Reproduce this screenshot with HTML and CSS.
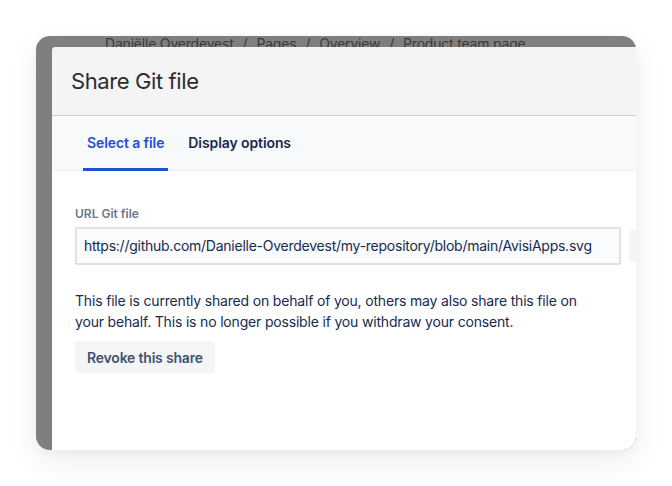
FILE: index.html
```html
<!DOCTYPE html>
<html>
<head>
<meta charset="utf-8">
<link rel="stylesheet" href="styles.css">
</head>
<body>
<div class="card">
  <div class="crumbs">Daniëlle Overdevest<span class="sep">/</span>Pages<span class="sep">/</span>Overview<span class="sep">/</span>Product team page</div>
  <div class="modal">
    <div class="modal-head"><h1 class="title">Share Git file</h1></div>
    <div class="tabs">
      <div class="tab active">Select a file</div>
      <div class="tab">Display options</div>
    </div>
    <div class="modal-body">
      <div class="label">URL Git file</div>
      <div class="field-row">
        <div class="input">https://github.com/Danielle-Overdevest/my-repository/blob/main/AvisiApps.svg</div>
        <div class="side-btn"></div>
      </div>
      <p class="note">This file is currently shared on behalf of you, others may also share this file on your behalf. This is no longer possible if you withdraw your consent.</p>
      <div class="btn">Revoke this share</div>
    </div>
  </div>
</div>
</body>
</html>
```
FILE: styles.css
```css
html, body { margin: 0; padding: 0; background: #ffffff; }
body {
  padding: 36px;
  font-family: Inter, "Liberation Sans", sans-serif;
  width: 672px;
  height: 486px;
  box-sizing: border-box;
}
.card {
  width: 600px;
  height: 414px;
  border-radius: 14px;
  background: #7f7f7f;
  overflow: hidden;
  box-shadow: 0 12px 32px rgba(0,0,0,0.07), 0 2px 10px rgba(0,0,0,0.04);
  display: flex;
  flex-direction: column;
}
.crumbs {
  height: 11px;
  flex: none;
  margin-top: -1px;
  padding-left: 69px;
  font-size: 14px;
  line-height: 18px;
  color: #3a3a3a;
  white-space: nowrap;
  letter-spacing: -0.2px;
}
.sep { margin: 0 9px; }
.modal {
  position: relative;
  z-index: 1;
  margin-left: 16px;
  margin-top: 1px;
  width: 640px;
  flex: 1;
  background: #ffffff;
  border-top-left-radius: 4px;
  display: flex;
  flex-direction: column;
}
.modal-head {
  height: 69px;
  flex: none;
  box-sizing: border-box;
  background: #f4f4f4;
  border-bottom: 1px solid #cfcfcf;
  border-top-left-radius: 4px;
  display: flex;
  align-items: center;
  padding-left: 19px;
}
.title {
  margin: 0;
  font-size: 22px;
  font-weight: 400;
  color: #2d2d2d;
  letter-spacing: -0.4px;
}
.tabs {
  height: 55px;
  flex: none;
  box-sizing: border-box;
  background: #f8f9fb;
  border-bottom: 1px solid #f0f1f3;
  display: flex;
  gap: 16px;
  padding-left: 31px;
}
.tab {
  padding: 0 4px;
  display: flex;
  align-items: center;
  font-size: 14px;
  font-weight: 600;
  color: #172b4d;
  border-bottom: 3px solid transparent;
  margin-bottom: -1px;
  letter-spacing: -0.1px;
}
.tab.active {
  color: #1f50d0;
  border-bottom-color: #1f50d0;
}
.modal-body {
  padding: 35px 0 0 23px;
}
.label {
  font-size: 12px;
  font-weight: 600;
  color: #6b778c;
  line-height: 16px;
}
.field-row {
  margin-top: 5px;
  display: flex;
  gap: 8px;
  align-items: center;
}
.input {
  width: 546px;
  height: 38px;
  flex: none;
  box-sizing: border-box;
  border: 2px solid #dfe1e6;
  border-radius: 3px;
  background: #fafbfc;
  padding-left: 7px;
  font-size: 14px;
  line-height: 34px;
  color: #172b4d;
  white-space: nowrap;
  overflow: hidden;
  letter-spacing: -0.25px;
}
.side-btn {
  width: 40px;
  height: 32px;
  flex: none;
  border-radius: 3px;
  background: #f4f5f7;
}
.note {
  margin: 25px 0 0 0;
  width: 520px;
  font-size: 14px;
  line-height: 21px;
  color: #172b4d;
  letter-spacing: -0.18px;
}
.btn {
  margin-top: 9px;
  display: inline-flex;
  align-items: center;
  height: 32px;
  padding: 0 12px;
  border-radius: 3px;
  background: #f4f5f7;
  color: #42526e;
  font-size: 14px;
  font-weight: 600;
  letter-spacing: -0.2px;
}
```
